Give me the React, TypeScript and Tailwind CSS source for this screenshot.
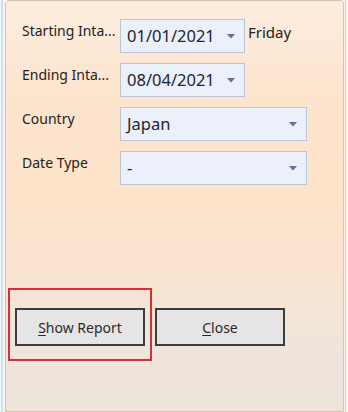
const font = { fontFamily: '"Noto Sans", "Open Sans", sans-serif' }

function Arrow() {
  return (
    <svg width="8" height="5" viewBox="0 0 8 5" className="shrink-0">
      <path d="M0 0 H8 L4 4.5 Z" fill="#5b7196" />
    </svg>
  )
}

function Combo({ value, className = '' }: { value: string; className?: string }) {
  return (
    <div
      className={`flex h-[34px] items-center justify-between border border-[#b9c4d6] bg-[#ebf0fa] pl-[6px] pr-[9px] ${className}`}
    >
      <span className="text-[16.5px] leading-none text-[#1c2430]">{value}</span>
      <Arrow />
    </div>
  )
}

function Label({ text }: { text: string }) {
  return <div className="pt-[2px] text-[14px] leading-[20px] text-[#222]">{text}</div>
}

function Button({ first, rest }: { first: string; rest: string }) {
  return (
    <button className="flex h-[38px] w-[130px] items-center justify-center border-2 border-[#3d3d3d] bg-[#e7e4e6] text-[14px] text-[#2a2a2a]">
      <span className="underline underline-offset-2">{first}</span>
      {rest}
    </button>
  )
}

export default function App() {
  return (
    <div className="flex h-[412px] w-[348px] bg-white" style={font}>
      {/* left window edge */}
      <div className="flex w-[5px] shrink-0">
        <div className="w-px bg-[#f4f8fc]" />
        <div className="w-[2px] bg-[#cfe0f3]" />
        <div className="w-[2px] bg-[#f7f5f2]" />
      </div>

      {/* panel */}
      <div className="flex flex-1 flex-col rounded-tl-[4px] rounded-tr-[3px] border border-[#d5c4ad] bg-[linear-gradient(to_bottom,#fdede0_0%,#fde4cc_25%,#fde3ca_50%,#f8e4d2_68%,#efe5dc_85%,#ede4db_100%)]">
        <div className="grid grid-cols-[98px_1fr] gap-y-[10px] pl-[16px] pt-[18px]">
          <Label text="Starting Inta..." />
          <div className="flex items-start gap-[3px]">
            <Combo value="01/01/2021" className="w-[125px]" />
            <span className="pt-[2px] text-[15px] leading-[22px] text-[#222]">Friday</span>
          </div>

          <Label text="Ending Inta..." />
          <Combo value="08/04/2021" className="w-[125px]" />

          <Label text="Country" />
          <Combo value="Japan" className="w-[187px]" />

          <Label text="Date Type" />
          <Combo value="-" className="w-[187px]" />
        </div>

        <div className="mt-[103px] flex items-start pl-[2px]">
          <div className="border-2 border-[#d3303b] pb-[13px] pl-[5px] pr-[5px] pt-[18px]">
            <Button first="S" rest="how Report" />
          </div>
          <div className="ml-[3px] pt-[20px]">
            <Button first="C" rest="lose" />
          </div>
        </div>
      </div>

      {/* right window edge */}
      <div className="flex w-[4px] shrink-0">
        <div className="w-px bg-[#f7ebe0]" />
        <div className="w-px bg-[#e9d9c6]" />
        <div className="w-[2px] bg-[#faf4ee]" />
      </div>
    </div>
  )
}
